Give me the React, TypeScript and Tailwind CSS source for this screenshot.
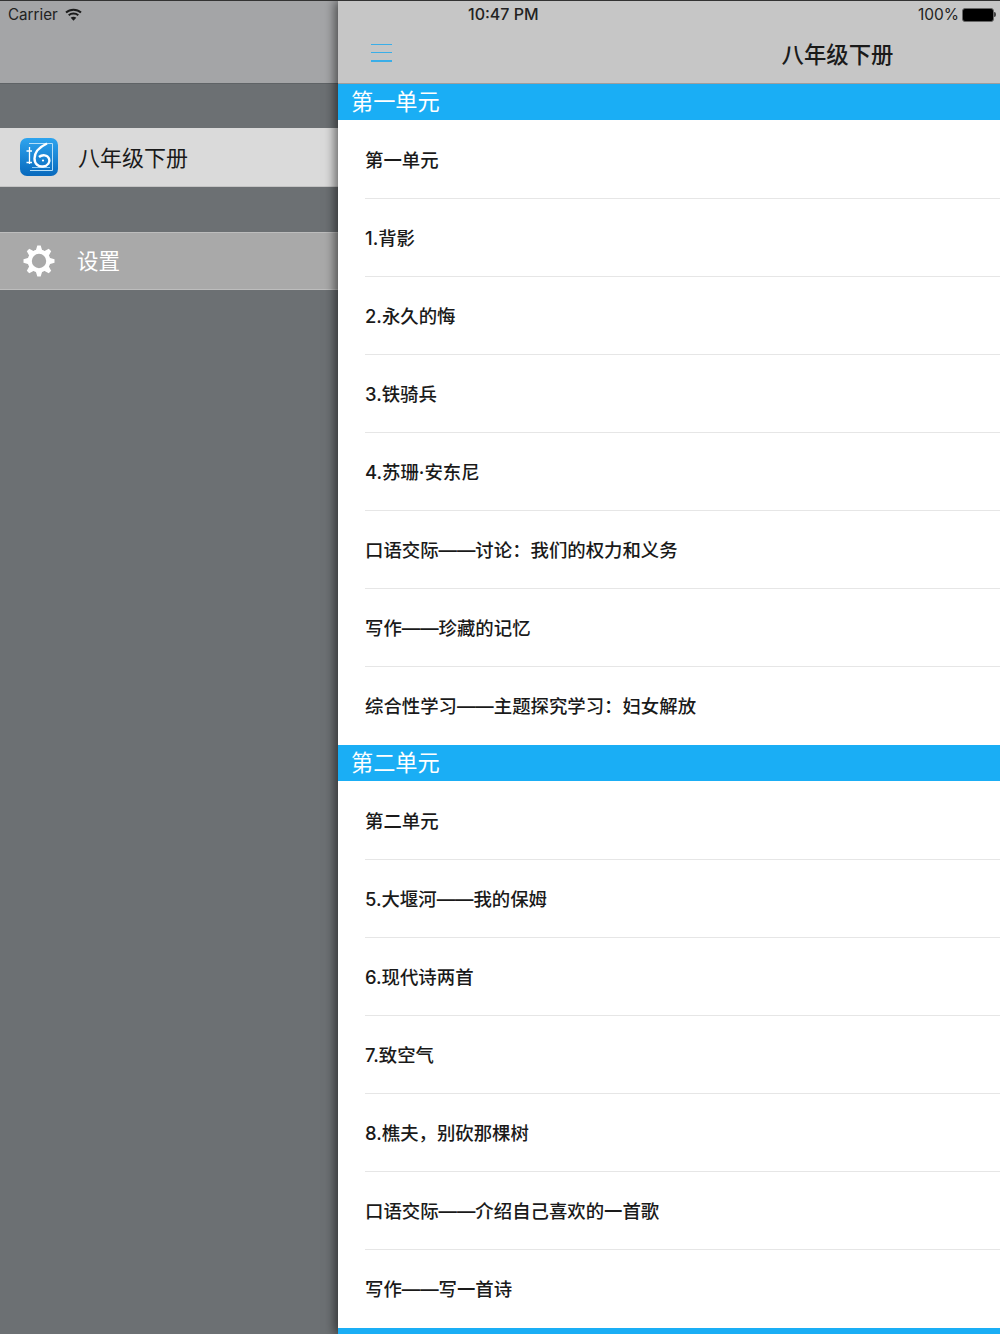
import React from "react";

interface Section {
  title: string;
  items: string[];
}

const sections: Section[] = [
  {
    title: "第一单元",
    items: [
      "第一单元",
      "1.背影",
      "2.永久的悔",
      "3.铁骑兵",
      "4.苏珊·安东尼",
      "口语交际——讨论：我们的权力和义务",
      "写作——珍藏的记忆",
      "综合性学习——主题探究学习：妇女解放",
    ],
  },
  {
    title: "第二单元",
    items: [
      "第二单元",
      "5.大堰河——我的保姆",
      "6.现代诗两首",
      "7.致空气",
      "8.樵夫，别砍那棵树",
      "口语交际——介绍自己喜欢的一首歌",
      "写作——写一首诗",
    ],
  },
];

const WifiIcon = () => (
  <svg width="17" height="13" viewBox="0 0 17 13" fill="none" stroke="#1c1c1c" strokeWidth="2">
    <path d="M1 4.600C5.200 .8 11.800 .8 16 4.600" />
    <path d="M3.700 7.300C6.400 5 10.600 5 13.300 7.300" />
    <path d="M8.500 12.800 5.700 9.800C7.300 8.500 9.700 8.500 11.300 9.800Z" fill="#1c1c1c" stroke="none" />
  </svg>
);

const AppLogo = () => (
  <svg width="38" height="38" viewBox="0 0 38 38" fill="none">
    <defs>
      <linearGradient id="logoBg" x1="0" y1="0" x2="0" y2="1">
        <stop offset="0" stopColor="#2ea4ee" />
        <stop offset="1" stopColor="#0869bd" />
      </linearGradient>
    </defs>
    <rect width="38" height="38" rx="7" fill="url(#logoBg)" />
    <g className="blur-[0.3px]">
      <path d="M9 5.500H32.500V32.500H10" stroke="#b5dff9" strokeWidth="1" />
      <path d="M12 29.500H30" stroke="#8fcdf5" strokeWidth="1" />
      <path d="M9.500 9V26M6.500 13H12M6.500 24.500H12" stroke="#fff" strokeWidth="1.300" />
      <path
        d="M27 5.500C19.500 9 14.500 14.500 14.500 20.500C14.500 26 18.500 29 23 28.500C28 28 30.500 24 29 20.500C27.500 17 22.500 16 19 19"
        stroke="#fff"
        strokeWidth="2.400"
      />
      <circle cx="23" cy="22.500" r="1.100" fill="#fff" />
    </g>
  </svg>
);

const GearIcon = () => (
  <svg width="34" height="34" viewBox="0 0 34 34" fill="none" className="blur-[0.6px]">
    <circle cx="17" cy="17" r="9.300" stroke="#fff" strokeWidth="4.200" />
    {[0, 45, 90, 135, 180, 225, 270, 315].map((deg) => (
      <polygon
        key={deg}
        points="13.500,7.500 15.300,1.500 18.700,1.500 20.500,7.500"
        fill="#fff"
        transform={`rotate(${deg} 17 17)`}
      />
    ))}
  </svg>
);

const Sidebar = () => (
  <aside className="flex w-[338px] shrink-0 flex-col bg-[#6c7073]">
    <div className="flex h-[83px] shrink-0 items-start border-b border-[#5f6366] bg-[#a4a5a7] pl-2 pt-[5px]">
      <span className="text-[15.200px] leading-[18px] text-[#222]">Carrier</span>
      <span className="ml-[7px] mt-[2px]">
        <WifiIcon />
      </span>
    </div>
    <div className="mt-11 flex h-[59px] items-center gap-[20px] border-b border-[#c4c4c4] bg-[#dadada] pl-5">
      <AppLogo />
      <span className="pt-[3px] text-[22px] text-[#1a1a1a]">八年级下册</span>
    </div>
    <div className="mt-[45px] flex h-[58px] items-center gap-[21px] border-y border-[#bdbdbd] bg-[#a9a9a9] pl-[22px]">
      <GearIcon />
      <span className="text-[21.500px] text-white">设置</span>
    </div>
  </aside>
);

const Row = ({ text, bordered }: { text: string; bordered: boolean }) => (
  <div className="pl-[27px]">
    <div
      className={`flex h-[78px] items-center pt-[2px] text-[18.400px] font-medium text-[#1a1a1a] ${
        bordered ? "border-b border-[#e6e6e6]" : ""
      }`}
    >
      {text}
    </div>
  </div>
);

const Main = () => (
  <main className="relative z-10 flex min-w-0 flex-1 flex-col bg-white shadow-[-3px_0_10px_rgba(0,0,0,0.55)]">
    <div className="flex h-[83px] shrink-0 flex-col border-b border-[#9d9d9d] bg-[#c6c6c6]">
      <div className="flex h-[27px] items-center pl-[130px] pr-[4px] text-[#222]">
        <span className="pb-[1px] text-[16px] font-medium">10:47 PM</span>
        <span className="ml-auto text-[15.500px]">100%</span>
        <span className="ml-[3px] flex items-center">
          <span className="flex h-[14px] w-[32px] rounded-[3px] border border-[#666] bg-black" />
          <span className="h-[5px] w-[2px] rounded-r-sm bg-[#444]" />
        </span>
      </div>
      <div className="flex flex-1 items-center justify-center pl-[337px]">
        <span className="whitespace-nowrap pb-[1px] text-[22.400px] font-medium text-[#1a1a1a]">八年级下册</span>
      </div>
    </div>
    <span className="absolute left-[33px] top-[43px] flex h-[18px] w-[21px] flex-col justify-between">
      <span className="h-[1px] bg-[#3aaee8]" />
      <span className="h-[1px] bg-[#3aaee8]" />
      <span className="h-[2px] bg-[#3aaee8]" />
    </span>
    {sections.map((section) => (
      <section key={section.title}>
        <div className="flex h-[36px] items-center bg-[#1aaef5] pl-[13px] text-[22.200px] text-white">
          {section.title}
        </div>
        <div className="pt-[1px]">
          {section.items.map((item, i) => (
            <Row key={item + i} text={item} bordered={i < section.items.length - 1} />
          ))}
        </div>
      </section>
    ))}
    <div className="h-[6px] bg-[#1aaef5]" />
  </main>
);

export default function App() {
  return (
    <div className="flex h-[1334px] w-[1000px] flex-col overflow-hidden font-['Inter','Noto_Sans_CJK_SC',sans-serif]">
      <div className="h-[1px] shrink-0 bg-[#333]" />
      <div className="flex min-h-0 flex-1 overflow-hidden bg-[#6c7073]">
        <Sidebar />
        <Main />
      </div>
    </div>
  );
}
